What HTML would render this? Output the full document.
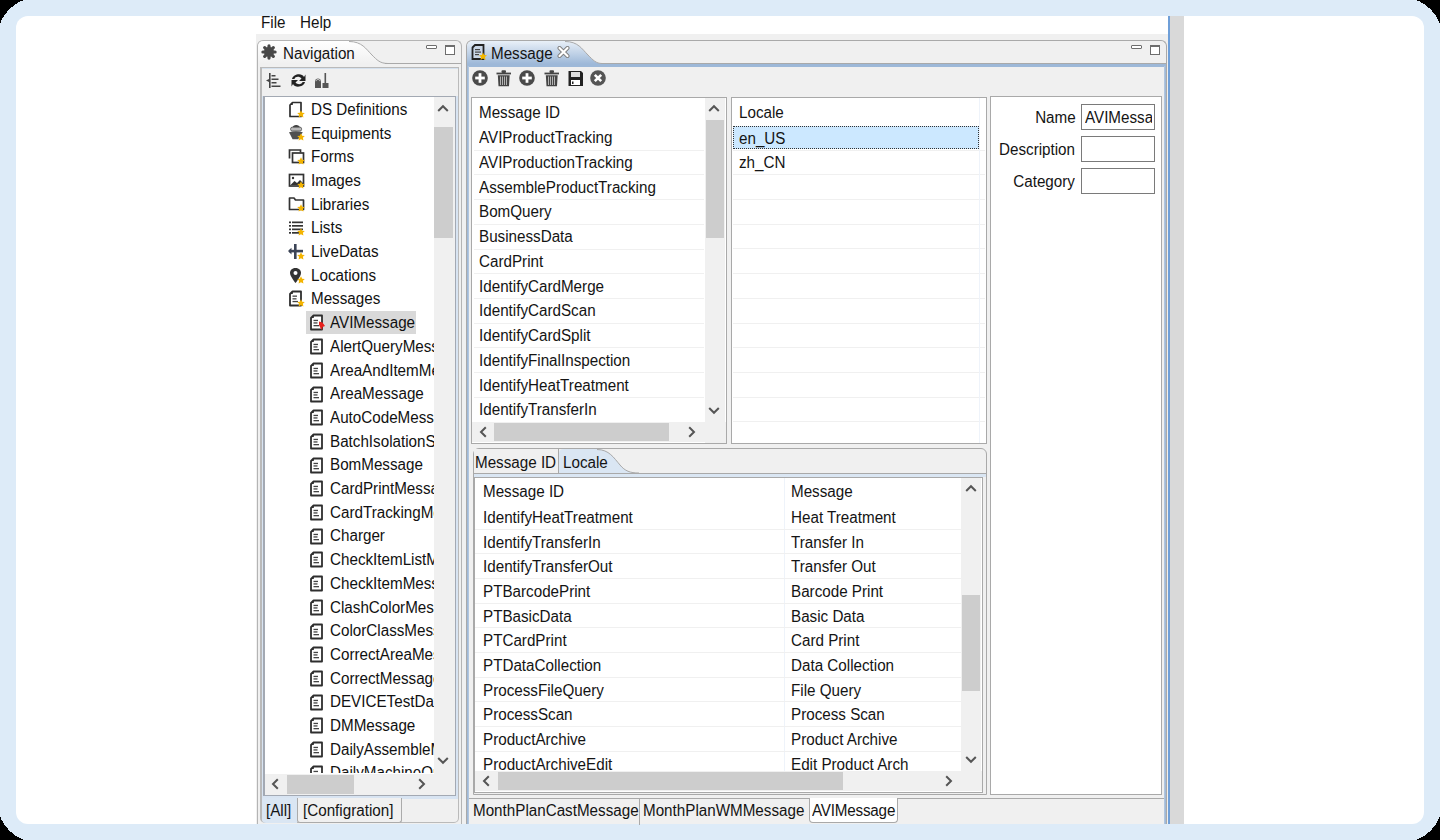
<!DOCTYPE html>
<html><head><meta charset="utf-8"><style>
html,body{margin:0;padding:0;width:1440px;height:840px;overflow:hidden;background:#000;font-family:"Liberation Sans", sans-serif}
div{position:absolute;box-sizing:border-box}
.t{white-space:nowrap}
svg{position:absolute}
</style></head><body>
<div style="left:0px;top:0px;width:1440px;height:840px;background:#ddebf8"></div>
<svg style="position:absolute;left:0px;top:0px" width="26" height="26" viewBox="0 0 26 26"><path d="M0 0 L0 25.50 L0.00 25.50 L0.03 25.16 L0.10 24.64 L0.24 24.03 L0.42 23.35 L0.65 22.61 L0.94 21.83 L1.27 21.02 L1.65 20.17 L2.08 19.30 L2.55 18.42 L3.07 17.51 L3.64 16.60 L4.24 15.69 L4.88 14.77 L5.56 13.85 L6.28 12.94 L7.02 12.05 L7.80 11.16 L8.61 10.29 L9.44 9.44 L10.29 8.61 L11.16 7.80 L12.05 7.02 L12.94 6.28 L13.85 5.56 L14.77 4.88 L15.69 4.24 L16.60 3.64 L17.51 3.07 L18.42 2.55 L19.30 2.08 L20.17 1.65 L21.02 1.27 L21.83 0.94 L22.61 0.65 L23.35 0.42 L24.03 0.24 L24.64 0.10 L25.16 0.03 L25.50 0.00 L25.50 0 Z" fill="#000" transform="" shape-rendering="crispEdges"/></svg>
<svg style="position:absolute;left:1414px;top:0px" width="26" height="26" viewBox="0 0 26 26"><path d="M0 0 L0 25.50 L0.00 25.50 L0.03 25.16 L0.10 24.64 L0.24 24.03 L0.42 23.35 L0.65 22.61 L0.94 21.83 L1.27 21.02 L1.65 20.17 L2.08 19.30 L2.55 18.42 L3.07 17.51 L3.64 16.60 L4.24 15.69 L4.88 14.77 L5.56 13.85 L6.28 12.94 L7.02 12.05 L7.80 11.16 L8.61 10.29 L9.44 9.44 L10.29 8.61 L11.16 7.80 L12.05 7.02 L12.94 6.28 L13.85 5.56 L14.77 4.88 L15.69 4.24 L16.60 3.64 L17.51 3.07 L18.42 2.55 L19.30 2.08 L20.17 1.65 L21.02 1.27 L21.83 0.94 L22.61 0.65 L23.35 0.42 L24.03 0.24 L24.64 0.10 L25.16 0.03 L25.50 0.00 L25.50 0 Z" fill="#000" transform="scale(-1,1) translate(-26,0)" shape-rendering="crispEdges"/></svg>
<svg style="position:absolute;left:0px;top:814px" width="26" height="26" viewBox="0 0 26 26"><path d="M0 0 L0 25.50 L0.00 25.50 L0.03 25.16 L0.10 24.64 L0.24 24.03 L0.42 23.35 L0.65 22.61 L0.94 21.83 L1.27 21.02 L1.65 20.17 L2.08 19.30 L2.55 18.42 L3.07 17.51 L3.64 16.60 L4.24 15.69 L4.88 14.77 L5.56 13.85 L6.28 12.94 L7.02 12.05 L7.80 11.16 L8.61 10.29 L9.44 9.44 L10.29 8.61 L11.16 7.80 L12.05 7.02 L12.94 6.28 L13.85 5.56 L14.77 4.88 L15.69 4.24 L16.60 3.64 L17.51 3.07 L18.42 2.55 L19.30 2.08 L20.17 1.65 L21.02 1.27 L21.83 0.94 L22.61 0.65 L23.35 0.42 L24.03 0.24 L24.64 0.10 L25.16 0.03 L25.50 0.00 L25.50 0 Z" fill="#000" transform="scale(1,-1) translate(0,-26)" shape-rendering="crispEdges"/></svg>
<svg style="position:absolute;left:1414px;top:814px" width="26" height="26" viewBox="0 0 26 26"><path d="M0 0 L0 25.50 L0.00 25.50 L0.03 25.16 L0.10 24.64 L0.24 24.03 L0.42 23.35 L0.65 22.61 L0.94 21.83 L1.27 21.02 L1.65 20.17 L2.08 19.30 L2.55 18.42 L3.07 17.51 L3.64 16.60 L4.24 15.69 L4.88 14.77 L5.56 13.85 L6.28 12.94 L7.02 12.05 L7.80 11.16 L8.61 10.29 L9.44 9.44 L10.29 8.61 L11.16 7.80 L12.05 7.02 L12.94 6.28 L13.85 5.56 L14.77 4.88 L15.69 4.24 L16.60 3.64 L17.51 3.07 L18.42 2.55 L19.30 2.08 L20.17 1.65 L21.02 1.27 L21.83 0.94 L22.61 0.65 L23.35 0.42 L24.03 0.24 L24.64 0.10 L25.16 0.03 L25.50 0.00 L25.50 0 Z" fill="#000" transform="scale(-1,-1) translate(-26,-26)" shape-rendering="crispEdges"/></svg>
<div style="left:16px;top:16px;width:1408px;height:808px;background:#fff;border-radius:12px"></div>
<div style="left:256px;top:33.5px;width:912px;height:790.5px;background:#f0f0f0"></div>
<div class="t" style="left:261px;top:14.40px;font-size:16px;line-height:17px;color:#141414;transform:scaleX(0.95);transform-origin:left center;">File</div>
<div class="t" style="left:299.7px;top:14.40px;font-size:16px;line-height:17px;color:#141414;transform:scaleX(0.95);transform-origin:left center;">Help</div>
<div style="left:1168px;top:16px;width:2px;height:808px;background:#6f9fd8"></div>
<div style="left:1170px;top:16px;width:14px;height:808px;background:#d9d9d9"></div>
<div style="left:257px;top:40px;width:205px;height:784px;border:1px solid #b4b4b4;border-bottom:none;border-radius:6px 6px 0 0;background:#f0f0f0"></div>
<svg style="position:absolute;left:258px;top:41px" width="130" height="23" viewBox="0 0 130 23"><defs><linearGradient id="gn" x1="0" y1="0" x2="0" y2="1"><stop offset="0" stop-color="#ffffff"/><stop offset="1" stop-color="#f0f0f0"/></linearGradient></defs><path d="M0 23 L0 6 Q0 0 6 0 L91 0 C104 0 108 8 114 14 C119 19 122 22.5 130 22.5 L130 23 Z" fill="url(#gn)"/><path d="M91 0.5 C104 0.5 108 8 114 14 C119 19 122 22.5 130 22.5" fill="none" stroke="#a9a9a9" stroke-width="1"/></svg>
<div style="left:385px;top:63px;width:76px;height:1px;background:#a9a9a9"></div>
<div class="t" style="left:282.5px;top:44.50px;font-size:16px;line-height:17px;color:#141414;transform:scaleX(0.95);transform-origin:left center;">Navigation</div>
<svg style="position:absolute;left:261px;top:44px" width="16" height="16" viewBox="0 0 16 16"><g fill="#484848"><circle cx="8" cy="8" r="5"/><rect x="6.4" y="0.3" width="3.2" height="15.4" rx="1.6" transform="rotate(0 8 8)"/><rect x="6.4" y="0.3" width="3.2" height="15.4" rx="1.6" transform="rotate(45 8 8)"/><rect x="6.4" y="0.3" width="3.2" height="15.4" rx="1.6" transform="rotate(90 8 8)"/><rect x="6.4" y="0.3" width="3.2" height="15.4" rx="1.6" transform="rotate(135 8 8)"/></g></svg>
<div style="left:426px;top:45px;width:10.5px;height:3.5px;border:1px solid #6d6d6d;box-sizing:border-box;border-radius:1px;background:#fff"></div>
<div style="left:444.5px;top:45px;width:10.5px;height:10px;border:1px solid #6d6d6d;border-top-width:2px;box-sizing:border-box;background:#fff"></div>
<div style="left:260px;top:66.5px;width:199px;height:756px;border:1px solid #bababa;border-width:1px 1px 1px 2px;border-radius:0 0 5px 5px;background:#f0f0f0"></div>
<div style="left:262px;top:67.5px;width:196px;height:1.5px;background:#d5e1ee"></div>
<svg style="position:absolute;left:266px;top:72px" width="17" height="17" viewBox="0 0 17 17"><g fill="#444"><rect x="3" y="1" width="1.6" height="15"/><rect x="5.5" y="3" width="4" height="1.5"/><rect x="5.5" y="6.5" width="7" height="1.5"/><rect x="5.5" y="10" width="5" height="1.5"/><rect x="5.5" y="13.5" width="9" height="1.5"/><path d="M0 8.5 L3 7 L3 10 Z"/></g></svg>
<svg style="position:absolute;left:290px;top:72px" width="17" height="17" viewBox="0 0 17 17"><g fill="#222"><path d="M2 7 C3 2 12 0.5 14 5 L15.5 2.5 L15.5 9 L9 9 L11.5 6.5 C9.5 4 5 4.5 4.5 7 Z"/><path d="M15 10 C14 15 5 16.5 3 12 L1.5 14.5 L1.5 8 L8 8 L5.5 10.5 C7.5 13 12 12.5 12.5 10 Z"/></g></svg>
<svg style="position:absolute;left:314px;top:72px" width="17" height="17" viewBox="0 0 17 17"><g fill="#555"><path d="M1 9 C1 5.5 7 5.5 7 9 L7 16 L1 16 Z"/><rect x="10.5" y="1" width="1.6" height="11"/><rect x="8.5" y="11" width="6" height="5"/></g><path d="M2 9.2 C2 7 6 7 6 9.2" fill="none" stroke="#ddd" stroke-width="1"/></svg>
<div style="left:262px;top:95.5px;width:196px;height:703px;background:#d8e4f2"></div>
<div style="left:263px;top:95.5px;width:193px;height:700px;border:1px solid #a3a9b3;border-left-width:2px;border-top-width:1.5px;background:#fff"></div>
<div style="left:265px;top:97px;width:168.7px;height:676px;overflow:hidden;background:#fff">
<div class="t" style="left:46.19999999999999px;top:3.80px;font-size:16px;line-height:17px;color:#111;transform:scaleX(0.95);transform-origin:left center;">DS Definitions</div>
<svg style="position:absolute;left:23.19999999999999px;top:3.5999999999999943px" width="17" height="17" viewBox="0 0 17 17"><path d="M2 4 L4.5 1.5 L13 1.5 L13 15.5 L2 15.5 Z" fill="#fff" stroke="#2e2e2e" stroke-width="1.7" stroke-linejoin="round"/><path d="M2 4 L4.8 4 L4.8 1.2Z" fill="#2e2e2e"/><path d="M13 9.2 L14.2 11.7 L16.8 12 L14.9 13.8 L15.4 16.5 L13 15.2 L10.6 16.5 L11.1 13.8 L9.2 12 L11.8 11.7 Z" fill="#f4b400"/></svg>
<div class="t" style="left:46.19999999999999px;top:27.50px;font-size:16px;line-height:17px;color:#111;transform:scaleX(0.95);transform-origin:left center;">Equipments</div>
<svg style="position:absolute;left:23.19999999999999px;top:27.299999999999997px" width="17" height="17" viewBox="0 0 17 17"><path d="M4.6 3.6 C4.6 0 11.8 0 11.8 3.6 Z" fill="#3a3a3a"/><rect x="2.6" y="3.2" width="11" height="3.8" rx="1.6" fill="#b8b8b8" stroke="#5a5a5a" stroke-width="0.9"/><path d="M1 8.2 Q8 6.5 14.8 8.2 L10.2 15.3 L4.6 15.3 Z" fill="#505050"/><path d="M13 9.2 L14.2 11.7 L16.8 12 L14.9 13.8 L15.4 16.5 L13 15.2 L10.6 16.5 L11.1 13.8 L9.2 12 L11.8 11.7 Z" fill="#f4b400"/></svg>
<div class="t" style="left:46.19999999999999px;top:51.20px;font-size:16px;line-height:17px;color:#111;transform:scaleX(0.95);transform-origin:left center;">Forms</div>
<svg style="position:absolute;left:23.19999999999999px;top:51.0px" width="17" height="17" viewBox="0 0 17 17"><path d="M1.5 10.5 L1.5 2 L12.5 2 L12.5 4.5" fill="none" stroke="#333" stroke-width="1.7"/><rect x="4.5" y="5" width="11" height="9.5" fill="#fff" stroke="#333" stroke-width="1.7"/><path d="M13 9.2 L14.2 11.7 L16.8 12 L14.9 13.8 L15.4 16.5 L13 15.2 L10.6 16.5 L11.1 13.8 L9.2 12 L11.8 11.7 Z" fill="#f4b400"/></svg>
<div class="t" style="left:46.19999999999999px;top:74.90px;font-size:16px;line-height:17px;color:#111;transform:scaleX(0.95);transform-origin:left center;">Images</div>
<svg style="position:absolute;left:23.19999999999999px;top:74.69999999999999px" width="17" height="17" viewBox="0 0 17 17"><rect x="1.5" y="2.5" width="14" height="11.5" fill="#fff" stroke="#333" stroke-width="1.7"/><path d="M2.5 13 L6.5 9 L9 11 L12 8 L15 11 L15 13 Z" fill="#333"/><circle cx="5" cy="6" r="1.2" fill="#333"/><path d="M13 9.2 L14.2 11.7 L16.8 12 L14.9 13.8 L15.4 16.5 L13 15.2 L10.6 16.5 L11.1 13.8 L9.2 12 L11.8 11.7 Z" fill="#f4b400"/></svg>
<div class="t" style="left:46.19999999999999px;top:98.60px;font-size:16px;line-height:17px;color:#111;transform:scaleX(0.95);transform-origin:left center;">Libraries</div>
<svg style="position:absolute;left:23.19999999999999px;top:98.4px" width="17" height="17" viewBox="0 0 17 17"><path d="M1.5 3 L6 3 L7.5 5 L15.5 5 L15.5 14.5 L1.5 14.5 Z" fill="#fff" stroke="#333" stroke-width="1.7" stroke-linejoin="round"/><path d="M13 9.2 L14.2 11.7 L16.8 12 L14.9 13.8 L15.4 16.5 L13 15.2 L10.6 16.5 L11.1 13.8 L9.2 12 L11.8 11.7 Z" fill="#f4b400"/></svg>
<div class="t" style="left:46.19999999999999px;top:122.30px;font-size:16px;line-height:17px;color:#111;transform:scaleX(0.95);transform-origin:left center;">Lists</div>
<svg style="position:absolute;left:23.19999999999999px;top:122.10000000000002px" width="17" height="17" viewBox="0 0 17 17"><g fill="#333"><rect x="1" y="2.5" width="2" height="1.7"/><rect x="4" y="2.5" width="11" height="1.7"/><rect x="1" y="6" width="2" height="1.7"/><rect x="4" y="6" width="11" height="1.7"/><rect x="1" y="9.5" width="2" height="1.7"/><rect x="4" y="9.5" width="11" height="1.7"/><rect x="1" y="13" width="2" height="1.7"/><rect x="4" y="13" width="8" height="1.7"/></g><path d="M13 9.2 L14.2 11.7 L16.8 12 L14.9 13.8 L15.4 16.5 L13 15.2 L10.6 16.5 L11.1 13.8 L9.2 12 L11.8 11.7 Z" fill="#f4b400"/></svg>
<div class="t" style="left:46.19999999999999px;top:146.00px;font-size:16px;line-height:17px;color:#111;transform:scaleX(0.95);transform-origin:left center;">LiveDatas</div>
<svg style="position:absolute;left:23.19999999999999px;top:145.8px" width="17" height="17" viewBox="0 0 17 17"><g fill="#3c4456"><rect x="6" y="1" width="2.6" height="15"/><rect x="1" y="6.8" width="14" height="2.6"/><path d="M0 8.1 L3.5 4.8 L3.5 11.4Z"/></g><path d="M13 9.2 L14.2 11.7 L16.8 12 L14.9 13.8 L15.4 16.5 L13 15.2 L10.6 16.5 L11.1 13.8 L9.2 12 L11.8 11.7 Z" fill="#f4b400"/></svg>
<div class="t" style="left:46.19999999999999px;top:169.70px;font-size:16px;line-height:17px;color:#111;transform:scaleX(0.95);transform-origin:left center;">Locations</div>
<svg style="position:absolute;left:23.19999999999999px;top:169.5px" width="17" height="17" viewBox="0 0 17 17"><path d="M7.5 1 C3.8 1 2 3.6 2 6 C2 9.3 7.5 16 7.5 16 C7.5 16 13 9.3 13 6 C13 3.6 11.2 1 7.5 1 Z" fill="#333"/><circle cx="7.5" cy="6" r="2" fill="#fff"/><path d="M13 9.2 L14.2 11.7 L16.8 12 L14.9 13.8 L15.4 16.5 L13 15.2 L10.6 16.5 L11.1 13.8 L9.2 12 L11.8 11.7 Z" fill="#f4b400"/></svg>
<div class="t" style="left:46.19999999999999px;top:193.40px;font-size:16px;line-height:17px;color:#111;transform:scaleX(0.95);transform-origin:left center;">Messages</div>
<svg style="position:absolute;left:23.19999999999999px;top:193.2px" width="17" height="17" viewBox="0 0 17 17"><path d="M2 4 L4.5 1.5 L13 1.5 L13 15.5 L2 15.5 Z" fill="#fff" stroke="#2e2e2e" stroke-width="1.8" stroke-linejoin="round"/><path d="M2 4 L4.8 4 L4.8 1.2Z" fill="#2e2e2e"/><g fill="#444"><rect x="4.5" y="5.5" width="4.5" height="1.3"/><rect x="4.5" y="8.2" width="4" height="1.3"/><rect x="4.5" y="10.9" width="5.5" height="1.3"/></g><path d="M13 9.2 L14.2 11.7 L16.8 12 L14.9 13.8 L15.4 16.5 L13 15.2 L10.6 16.5 L11.1 13.8 L9.2 12 L11.8 11.7 Z" fill="#f4b400"/></svg>
<div style="left:41px;top:214.09999999999997px;width:110px;height:23.3px;background:#d9d9d9"></div>
<div class="t" style="left:64.89999999999998px;top:217.10px;font-size:16px;line-height:17px;color:#111;transform:scaleX(0.95);transform-origin:left center;">AVIMessage</div>
<svg style="position:absolute;left:43.5px;top:217.39999999999998px" width="17" height="17" viewBox="0 0 17 17"><path d="M2 4 L4.5 1.5 L13 1.5 L13 15.5 L2 15.5 Z" fill="#fff" stroke="#2e2e2e" stroke-width="1.8" stroke-linejoin="round"/><path d="M2 4 L4.8 4 L4.8 1.2Z" fill="#2e2e2e"/><g fill="#444"><rect x="4.5" y="5.8" width="4.5" height="1.3"/><rect x="4.5" y="8.3" width="4" height="1.3"/><rect x="4.5" y="11" width="5.5" height="1.3"/></g><path d="M10 7.5 L13.5 8.5 L16 12 L13.5 13 L13 16 L11.5 14 L10 11 Z" fill="#e8201c"/></svg>
<div class="t" style="left:64.89999999999998px;top:240.80px;font-size:16px;line-height:17px;color:#111;transform:scaleX(0.95);transform-origin:left center;">AlertQueryMessage</div>
<svg style="position:absolute;left:43.5px;top:241.10000000000002px" width="17" height="17" viewBox="0 0 17 17"><path d="M2 4 L4.5 1.5 L13 1.5 L13 15.5 L2 15.5 Z" fill="#fff" stroke="#2e2e2e" stroke-width="1.8" stroke-linejoin="round"/><path d="M2 4 L4.8 4 L4.8 1.2Z" fill="#2e2e2e"/><g fill="#444"><rect x="4.5" y="5.8" width="4.5" height="1.3"/><rect x="4.5" y="8.3" width="4" height="1.3"/><rect x="4.5" y="11" width="5.5" height="1.3"/></g></svg>
<div class="t" style="left:64.89999999999998px;top:264.50px;font-size:16px;line-height:17px;color:#111;transform:scaleX(0.95);transform-origin:left center;">AreaAndItemMessage</div>
<svg style="position:absolute;left:43.5px;top:264.8px" width="17" height="17" viewBox="0 0 17 17"><path d="M2 4 L4.5 1.5 L13 1.5 L13 15.5 L2 15.5 Z" fill="#fff" stroke="#2e2e2e" stroke-width="1.8" stroke-linejoin="round"/><path d="M2 4 L4.8 4 L4.8 1.2Z" fill="#2e2e2e"/><g fill="#444"><rect x="4.5" y="5.8" width="4.5" height="1.3"/><rect x="4.5" y="8.3" width="4" height="1.3"/><rect x="4.5" y="11" width="5.5" height="1.3"/></g></svg>
<div class="t" style="left:64.89999999999998px;top:288.20px;font-size:16px;line-height:17px;color:#111;transform:scaleX(0.95);transform-origin:left center;">AreaMessage</div>
<svg style="position:absolute;left:43.5px;top:288.5px" width="17" height="17" viewBox="0 0 17 17"><path d="M2 4 L4.5 1.5 L13 1.5 L13 15.5 L2 15.5 Z" fill="#fff" stroke="#2e2e2e" stroke-width="1.8" stroke-linejoin="round"/><path d="M2 4 L4.8 4 L4.8 1.2Z" fill="#2e2e2e"/><g fill="#444"><rect x="4.5" y="5.8" width="4.5" height="1.3"/><rect x="4.5" y="8.3" width="4" height="1.3"/><rect x="4.5" y="11" width="5.5" height="1.3"/></g></svg>
<div class="t" style="left:64.89999999999998px;top:311.90px;font-size:16px;line-height:17px;color:#111;transform:scaleX(0.95);transform-origin:left center;">AutoCodeMessage</div>
<svg style="position:absolute;left:43.5px;top:312.2px" width="17" height="17" viewBox="0 0 17 17"><path d="M2 4 L4.5 1.5 L13 1.5 L13 15.5 L2 15.5 Z" fill="#fff" stroke="#2e2e2e" stroke-width="1.8" stroke-linejoin="round"/><path d="M2 4 L4.8 4 L4.8 1.2Z" fill="#2e2e2e"/><g fill="#444"><rect x="4.5" y="5.8" width="4.5" height="1.3"/><rect x="4.5" y="8.3" width="4" height="1.3"/><rect x="4.5" y="11" width="5.5" height="1.3"/></g></svg>
<div class="t" style="left:64.89999999999998px;top:335.60px;font-size:16px;line-height:17px;color:#111;transform:scaleX(0.95);transform-origin:left center;">BatchIsolationSetting</div>
<svg style="position:absolute;left:43.5px;top:335.90000000000003px" width="17" height="17" viewBox="0 0 17 17"><path d="M2 4 L4.5 1.5 L13 1.5 L13 15.5 L2 15.5 Z" fill="#fff" stroke="#2e2e2e" stroke-width="1.8" stroke-linejoin="round"/><path d="M2 4 L4.8 4 L4.8 1.2Z" fill="#2e2e2e"/><g fill="#444"><rect x="4.5" y="5.8" width="4.5" height="1.3"/><rect x="4.5" y="8.3" width="4" height="1.3"/><rect x="4.5" y="11" width="5.5" height="1.3"/></g></svg>
<div class="t" style="left:64.89999999999998px;top:359.30px;font-size:16px;line-height:17px;color:#111;transform:scaleX(0.95);transform-origin:left center;">BomMessage</div>
<svg style="position:absolute;left:43.5px;top:359.6px" width="17" height="17" viewBox="0 0 17 17"><path d="M2 4 L4.5 1.5 L13 1.5 L13 15.5 L2 15.5 Z" fill="#fff" stroke="#2e2e2e" stroke-width="1.8" stroke-linejoin="round"/><path d="M2 4 L4.8 4 L4.8 1.2Z" fill="#2e2e2e"/><g fill="#444"><rect x="4.5" y="5.8" width="4.5" height="1.3"/><rect x="4.5" y="8.3" width="4" height="1.3"/><rect x="4.5" y="11" width="5.5" height="1.3"/></g></svg>
<div class="t" style="left:64.89999999999998px;top:383.00px;font-size:16px;line-height:17px;color:#111;transform:scaleX(0.95);transform-origin:left center;">CardPrintMessage</div>
<svg style="position:absolute;left:43.5px;top:383.3px" width="17" height="17" viewBox="0 0 17 17"><path d="M2 4 L4.5 1.5 L13 1.5 L13 15.5 L2 15.5 Z" fill="#fff" stroke="#2e2e2e" stroke-width="1.8" stroke-linejoin="round"/><path d="M2 4 L4.8 4 L4.8 1.2Z" fill="#2e2e2e"/><g fill="#444"><rect x="4.5" y="5.8" width="4.5" height="1.3"/><rect x="4.5" y="8.3" width="4" height="1.3"/><rect x="4.5" y="11" width="5.5" height="1.3"/></g></svg>
<div class="t" style="left:64.89999999999998px;top:406.70px;font-size:16px;line-height:17px;color:#111;transform:scaleX(0.95);transform-origin:left center;">CardTrackingMessage</div>
<svg style="position:absolute;left:43.5px;top:406.99999999999994px" width="17" height="17" viewBox="0 0 17 17"><path d="M2 4 L4.5 1.5 L13 1.5 L13 15.5 L2 15.5 Z" fill="#fff" stroke="#2e2e2e" stroke-width="1.8" stroke-linejoin="round"/><path d="M2 4 L4.8 4 L4.8 1.2Z" fill="#2e2e2e"/><g fill="#444"><rect x="4.5" y="5.8" width="4.5" height="1.3"/><rect x="4.5" y="8.3" width="4" height="1.3"/><rect x="4.5" y="11" width="5.5" height="1.3"/></g></svg>
<div class="t" style="left:64.89999999999998px;top:430.40px;font-size:16px;line-height:17px;color:#111;transform:scaleX(0.95);transform-origin:left center;">Charger</div>
<svg style="position:absolute;left:43.5px;top:430.69999999999993px" width="17" height="17" viewBox="0 0 17 17"><path d="M2 4 L4.5 1.5 L13 1.5 L13 15.5 L2 15.5 Z" fill="#fff" stroke="#2e2e2e" stroke-width="1.8" stroke-linejoin="round"/><path d="M2 4 L4.8 4 L4.8 1.2Z" fill="#2e2e2e"/><g fill="#444"><rect x="4.5" y="5.8" width="4.5" height="1.3"/><rect x="4.5" y="8.3" width="4" height="1.3"/><rect x="4.5" y="11" width="5.5" height="1.3"/></g></svg>
<div class="t" style="left:64.89999999999998px;top:454.10px;font-size:16px;line-height:17px;color:#111;transform:scaleX(0.95);transform-origin:left center;">CheckItemListMessage</div>
<svg style="position:absolute;left:43.5px;top:454.4px" width="17" height="17" viewBox="0 0 17 17"><path d="M2 4 L4.5 1.5 L13 1.5 L13 15.5 L2 15.5 Z" fill="#fff" stroke="#2e2e2e" stroke-width="1.8" stroke-linejoin="round"/><path d="M2 4 L4.8 4 L4.8 1.2Z" fill="#2e2e2e"/><g fill="#444"><rect x="4.5" y="5.8" width="4.5" height="1.3"/><rect x="4.5" y="8.3" width="4" height="1.3"/><rect x="4.5" y="11" width="5.5" height="1.3"/></g></svg>
<div class="t" style="left:64.89999999999998px;top:477.80px;font-size:16px;line-height:17px;color:#111;transform:scaleX(0.95);transform-origin:left center;">CheckItemMessage</div>
<svg style="position:absolute;left:43.5px;top:478.0999999999999px" width="17" height="17" viewBox="0 0 17 17"><path d="M2 4 L4.5 1.5 L13 1.5 L13 15.5 L2 15.5 Z" fill="#fff" stroke="#2e2e2e" stroke-width="1.8" stroke-linejoin="round"/><path d="M2 4 L4.8 4 L4.8 1.2Z" fill="#2e2e2e"/><g fill="#444"><rect x="4.5" y="5.8" width="4.5" height="1.3"/><rect x="4.5" y="8.3" width="4" height="1.3"/><rect x="4.5" y="11" width="5.5" height="1.3"/></g></svg>
<div class="t" style="left:64.89999999999998px;top:501.50px;font-size:16px;line-height:17px;color:#111;transform:scaleX(0.95);transform-origin:left center;">ClashColorMessage</div>
<svg style="position:absolute;left:43.5px;top:501.79999999999995px" width="17" height="17" viewBox="0 0 17 17"><path d="M2 4 L4.5 1.5 L13 1.5 L13 15.5 L2 15.5 Z" fill="#fff" stroke="#2e2e2e" stroke-width="1.8" stroke-linejoin="round"/><path d="M2 4 L4.8 4 L4.8 1.2Z" fill="#2e2e2e"/><g fill="#444"><rect x="4.5" y="5.8" width="4.5" height="1.3"/><rect x="4.5" y="8.3" width="4" height="1.3"/><rect x="4.5" y="11" width="5.5" height="1.3"/></g></svg>
<div class="t" style="left:64.89999999999998px;top:525.20px;font-size:16px;line-height:17px;color:#111;transform:scaleX(0.95);transform-origin:left center;">ColorClassMessage</div>
<svg style="position:absolute;left:43.5px;top:525.4999999999999px" width="17" height="17" viewBox="0 0 17 17"><path d="M2 4 L4.5 1.5 L13 1.5 L13 15.5 L2 15.5 Z" fill="#fff" stroke="#2e2e2e" stroke-width="1.8" stroke-linejoin="round"/><path d="M2 4 L4.8 4 L4.8 1.2Z" fill="#2e2e2e"/><g fill="#444"><rect x="4.5" y="5.8" width="4.5" height="1.3"/><rect x="4.5" y="8.3" width="4" height="1.3"/><rect x="4.5" y="11" width="5.5" height="1.3"/></g></svg>
<div class="t" style="left:64.89999999999998px;top:548.90px;font-size:16px;line-height:17px;color:#111;transform:scaleX(0.95);transform-origin:left center;">CorrectAreaMessage</div>
<svg style="position:absolute;left:43.5px;top:549.1999999999999px" width="17" height="17" viewBox="0 0 17 17"><path d="M2 4 L4.5 1.5 L13 1.5 L13 15.5 L2 15.5 Z" fill="#fff" stroke="#2e2e2e" stroke-width="1.8" stroke-linejoin="round"/><path d="M2 4 L4.8 4 L4.8 1.2Z" fill="#2e2e2e"/><g fill="#444"><rect x="4.5" y="5.8" width="4.5" height="1.3"/><rect x="4.5" y="8.3" width="4" height="1.3"/><rect x="4.5" y="11" width="5.5" height="1.3"/></g></svg>
<div class="t" style="left:64.89999999999998px;top:572.60px;font-size:16px;line-height:17px;color:#111;transform:scaleX(0.95);transform-origin:left center;">CorrectMessage</div>
<svg style="position:absolute;left:43.5px;top:572.8999999999999px" width="17" height="17" viewBox="0 0 17 17"><path d="M2 4 L4.5 1.5 L13 1.5 L13 15.5 L2 15.5 Z" fill="#fff" stroke="#2e2e2e" stroke-width="1.8" stroke-linejoin="round"/><path d="M2 4 L4.8 4 L4.8 1.2Z" fill="#2e2e2e"/><g fill="#444"><rect x="4.5" y="5.8" width="4.5" height="1.3"/><rect x="4.5" y="8.3" width="4" height="1.3"/><rect x="4.5" y="11" width="5.5" height="1.3"/></g></svg>
<div class="t" style="left:64.89999999999998px;top:596.30px;font-size:16px;line-height:17px;color:#111;transform:scaleX(0.95);transform-origin:left center;">DEVICETestData</div>
<svg style="position:absolute;left:43.5px;top:596.5999999999999px" width="17" height="17" viewBox="0 0 17 17"><path d="M2 4 L4.5 1.5 L13 1.5 L13 15.5 L2 15.5 Z" fill="#fff" stroke="#2e2e2e" stroke-width="1.8" stroke-linejoin="round"/><path d="M2 4 L4.8 4 L4.8 1.2Z" fill="#2e2e2e"/><g fill="#444"><rect x="4.5" y="5.8" width="4.5" height="1.3"/><rect x="4.5" y="8.3" width="4" height="1.3"/><rect x="4.5" y="11" width="5.5" height="1.3"/></g></svg>
<div class="t" style="left:64.89999999999998px;top:620.00px;font-size:16px;line-height:17px;color:#111;transform:scaleX(0.95);transform-origin:left center;">DMMessage</div>
<svg style="position:absolute;left:43.5px;top:620.2999999999998px" width="17" height="17" viewBox="0 0 17 17"><path d="M2 4 L4.5 1.5 L13 1.5 L13 15.5 L2 15.5 Z" fill="#fff" stroke="#2e2e2e" stroke-width="1.8" stroke-linejoin="round"/><path d="M2 4 L4.8 4 L4.8 1.2Z" fill="#2e2e2e"/><g fill="#444"><rect x="4.5" y="5.8" width="4.5" height="1.3"/><rect x="4.5" y="8.3" width="4" height="1.3"/><rect x="4.5" y="11" width="5.5" height="1.3"/></g></svg>
<div class="t" style="left:64.89999999999998px;top:643.70px;font-size:16px;line-height:17px;color:#111;transform:scaleX(0.95);transform-origin:left center;">DailyAssembleMessage</div>
<svg style="position:absolute;left:43.5px;top:643.9999999999999px" width="17" height="17" viewBox="0 0 17 17"><path d="M2 4 L4.5 1.5 L13 1.5 L13 15.5 L2 15.5 Z" fill="#fff" stroke="#2e2e2e" stroke-width="1.8" stroke-linejoin="round"/><path d="M2 4 L4.8 4 L4.8 1.2Z" fill="#2e2e2e"/><g fill="#444"><rect x="4.5" y="5.8" width="4.5" height="1.3"/><rect x="4.5" y="8.3" width="4" height="1.3"/><rect x="4.5" y="11" width="5.5" height="1.3"/></g></svg>
<div class="t" style="left:64.89999999999998px;top:667.40px;font-size:16px;line-height:17px;color:#111;transform:scaleX(0.95);transform-origin:left center;">DailyMachineOutput</div>
<svg style="position:absolute;left:43.5px;top:667.6999999999999px" width="17" height="17" viewBox="0 0 17 17"><path d="M2 4 L4.5 1.5 L13 1.5 L13 15.5 L2 15.5 Z" fill="#fff" stroke="#2e2e2e" stroke-width="1.8" stroke-linejoin="round"/><path d="M2 4 L4.8 4 L4.8 1.2Z" fill="#2e2e2e"/><g fill="#444"><rect x="4.5" y="5.8" width="4.5" height="1.3"/><rect x="4.5" y="8.3" width="4" height="1.3"/><rect x="4.5" y="11" width="5.5" height="1.3"/></g></svg>
</div>
<div style="left:433.7px;top:96.8px;width:21.3px;height:677px;background:#f0f0f0"></div>
<div style="left:434px;top:127.2px;width:19px;height:111px;background:#cdcdcd"></div>
<svg style="position:absolute;left:436.2px;top:102.5px" width="14" height="10" viewBox="0 0 14 10"><path d="M2.2 8 L7 3.2 L11.8 8" fill="none" stroke="#555" stroke-width="2"/></svg>
<svg style="position:absolute;left:436.2px;top:756px" width="14" height="10" viewBox="0 0 14 10"><path d="M2.2 2 L7 6.8 L11.8 2" fill="none" stroke="#555" stroke-width="2"/></svg>
<div style="left:264.5px;top:773.5px;width:190px;height:21px;background:#f0f0f0"></div>
<div style="left:287px;top:774.5px;width:67px;height:19px;background:#cdcdcd"></div>
<svg style="position:absolute;left:269.5px;top:777px" width="10" height="14" viewBox="0 0 10 14"><path d="M7.8 2.2 L3 7 L7.8 11.8" fill="none" stroke="#555" stroke-width="2"/></svg>
<svg style="position:absolute;left:416.5px;top:777px" width="10" height="14" viewBox="0 0 10 14"><path d="M2.2 2.2 L7 7 L2.2 11.8" fill="none" stroke="#555" stroke-width="2"/></svg>
<div style="left:262px;top:797.5px;width:35px;height:25px;background:#dae6f3;border-radius:0 0 0 4px"></div>
<div class="t" style="left:265.5px;top:802.30px;font-size:16px;line-height:17px;color:#141414;transform:scaleX(0.95);transform-origin:left center;">[All]</div>
<div style="left:296.5px;top:797.5px;width:105px;height:25px;background:#f0f0f0;border:1px solid #ababab;border-top:none;border-radius:0 0 3px 3px"></div>
<div class="t" style="left:302.6px;top:802.30px;font-size:16px;line-height:17px;color:#141414;transform:scaleX(0.95);transform-origin:left center;">[Configration]</div>
<div style="left:466px;top:40px;width:701px;height:784px;border:1px solid #a9a9a9;border-bottom:none;border-radius:6px 6px 0 0;background:#f0f0f0"></div>
<svg style="position:absolute;left:467px;top:41px" width="135" height="23" viewBox="0 0 135 23"><defs><linearGradient id="gm" x1="0" y1="0" x2="0" y2="1"><stop offset="0" stop-color="#e9f0f8"/><stop offset="1" stop-color="#9db8d8"/></linearGradient></defs><path d="M0 23 L0 6 Q0 0 6 0 L98 0 C111 0 115 8 121 14 C126 19 129 22.5 135 22.5 L135 23 Z" fill="url(#gm)"/><path d="M98 0.5 C111 0.5 115 8 121 14 C126 19 129 22.5 135 22.5" fill="none" stroke="#a9a9a9" stroke-width="1"/></svg>
<div style="left:601px;top:63px;width:565px;height:1px;background:#a9a9a9"></div>
<div style="left:467px;top:63.5px;width:699px;height:3px;background:#9db8d8"></div>
<div style="left:467px;top:66px;width:2px;height:758px;background:linear-gradient(to right,#98b3d4,#b9cce2)"></div>
<div style="left:1164px;top:66px;width:2px;height:758px;background:linear-gradient(to left,#98b3d4,#b9cce2)"></div>
<svg style="position:absolute;left:471px;top:44px" width="17" height="17" viewBox="0 0 17 17"><path d="M1.5 3.5 L4 1 L12.5 1 L12.5 15 L1.5 15 Z" fill="#c9d6e6" stroke="#222" stroke-width="1.8"/><g fill="#444"><rect x="4" y="5" width="5" height="1.2"/><rect x="4" y="7.5" width="6" height="1.2"/><rect x="4" y="10" width="4" height="1.2"/></g><path d="M12 8.5 L13.2 11 L16 11.3 L14 13.1 L14.5 16 L12 14.6 L9.5 16 L10 13.1 L8 11.3 L10.8 11 Z" fill="#f5b800"/></svg>
<div class="t" style="left:490.8px;top:44.50px;font-size:16px;line-height:17px;color:#141414;transform:scaleX(0.95);transform-origin:left center;">Message</div>
<svg style="position:absolute;left:557px;top:45.5px" width="13" height="12" viewBox="0 0 13 12"><path d="M2.5 2 L10.5 10 M10.5 2 L2.5 10" stroke="#7d7d7d" stroke-width="4" stroke-linecap="round"/><path d="M2.5 2 L10.5 10 M10.5 2 L2.5 10" stroke="#fff" stroke-width="2.2" stroke-linecap="round"/></svg>
<div style="left:1131px;top:45px;width:10.5px;height:3.8px;border:1px solid #6d6d6d;border-radius:1px;background:#fff"></div>
<div style="left:1149.8px;top:45px;width:10.2px;height:10px;border:1px solid #6d6d6d;border-top-width:2px;background:#fff"></div>
<svg style="position:absolute;left:471.8px;top:69.7px" width="16" height="16" viewBox="0 0 16 16"><circle cx="8" cy="8" r="7.8" fill="#4a4a4a"/><rect x="6.6" y="3.2" width="2.8" height="9.6" fill="#fff"/><rect x="3.2" y="6.6" width="9.6" height="2.8" fill="#fff"/></svg>
<svg style="position:absolute;left:496px;top:69.5px" width="15" height="17" viewBox="0 0 15 17"><g fill="#444"><rect x="0.5" y="2.6" width="14.5" height="1.8"/><rect x="5.5" y="0.3" width="4.5" height="2.6" rx="1"/><path d="M1.8 5.2 L13.7 5.2 L13 16.2 L2.5 16.2 Z"/></g><g fill="#cfcfcf"><rect x="4" y="6.5" width="0.8" height="8.5"/><rect x="6" y="6.5" width="0.8" height="8.5"/><rect x="8" y="6.5" width="0.8" height="8.5"/><rect x="10" y="6.5" width="0.8" height="8.5"/></g></svg>
<svg style="position:absolute;left:519.2px;top:69.7px" width="16" height="16" viewBox="0 0 16 16"><circle cx="8" cy="8" r="7.8" fill="#4a4a4a"/><rect x="6.6" y="3.2" width="2.8" height="9.6" fill="#fff"/><rect x="3.2" y="6.6" width="9.6" height="2.8" fill="#fff"/></svg>
<svg style="position:absolute;left:543.8px;top:69.5px" width="15" height="17" viewBox="0 0 15 17"><g fill="#444"><rect x="0.5" y="2.6" width="14.5" height="1.8"/><rect x="5.5" y="0.3" width="4.5" height="2.6" rx="1"/><path d="M1.8 5.2 L13.7 5.2 L13 16.2 L2.5 16.2 Z"/></g><g fill="#cfcfcf"><rect x="4" y="6.5" width="0.8" height="8.5"/><rect x="6" y="6.5" width="0.8" height="8.5"/><rect x="8" y="6.5" width="0.8" height="8.5"/><rect x="10" y="6.5" width="0.8" height="8.5"/></g></svg>
<svg style="position:absolute;left:567.5px;top:69.5px" width="16" height="17" viewBox="0 0 16 17"><path d="M0.5 1 L13 1 L15 3 L15 16 L0.5 16 Z" fill="#222"/><rect x="3" y="2" width="9" height="5" fill="#ddd"/><rect x="3" y="10" width="9" height="5" fill="#fff"/><rect x="4" y="11.5" width="1.5" height="2.5" fill="#222"/></svg>
<svg style="position:absolute;left:590px;top:69.7px" width="16" height="16" viewBox="0 0 16 16"><circle cx="8" cy="8" r="7.8" fill="#555"/><path d="M4.8 4.8 L11.2 11.2 M11.2 4.8 L4.8 11.2" stroke="#fff" stroke-width="2.6"/></svg>
<div style="left:471px;top:96.5px;width:256px;height:347.5px;border:1px solid #a9a9a9;background:#fff"></div>
<div style="left:472px;top:97px;width:232.8px;height:324.9px;overflow:hidden;">
<div class="t" style="left:7.300000000000011px;top:7.10px;font-size:16px;line-height:17px;color:#141414;transform:scaleX(0.95);transform-origin:left center;">Message ID</div>
<div style="left:1.5px;top:52.60000000000002px;width:230px;height:1px;background:#f0f0f0"></div>
<div class="t" style="left:7.300000000000011px;top:32.30px;font-size:16px;line-height:17px;color:#141414;transform:scaleX(0.95);transform-origin:left center;">AVIProductTracking</div>
<div style="left:1.5px;top:77.33000000000001px;width:230px;height:1px;background:#f0f0f0"></div>
<div class="t" style="left:7.300000000000011px;top:57.03px;font-size:16px;line-height:17px;color:#141414;transform:scaleX(0.95);transform-origin:left center;">AVIProductionTracking</div>
<div style="left:1.5px;top:102.06000000000003px;width:230px;height:1px;background:#f0f0f0"></div>
<div class="t" style="left:7.300000000000011px;top:81.76px;font-size:16px;line-height:17px;color:#141414;transform:scaleX(0.95);transform-origin:left center;">AssembleProductTracking</div>
<div style="left:1.5px;top:126.79000000000002px;width:230px;height:1px;background:#f0f0f0"></div>
<div class="t" style="left:7.300000000000011px;top:106.49px;font-size:16px;line-height:17px;color:#141414;transform:scaleX(0.95);transform-origin:left center;">BomQuery</div>
<div style="left:1.5px;top:151.52000000000004px;width:230px;height:1px;background:#f0f0f0"></div>
<div class="t" style="left:7.300000000000011px;top:131.22px;font-size:16px;line-height:17px;color:#141414;transform:scaleX(0.95);transform-origin:left center;">BusinessData</div>
<div style="left:1.5px;top:176.25000000000006px;width:230px;height:1px;background:#f0f0f0"></div>
<div class="t" style="left:7.300000000000011px;top:155.95px;font-size:16px;line-height:17px;color:#141414;transform:scaleX(0.95);transform-origin:left center;">CardPrint</div>
<div style="left:1.5px;top:200.98000000000002px;width:230px;height:1px;background:#f0f0f0"></div>
<div class="t" style="left:7.300000000000011px;top:180.68px;font-size:16px;line-height:17px;color:#141414;transform:scaleX(0.95);transform-origin:left center;">IdentifyCardMerge</div>
<div style="left:1.5px;top:225.71000000000004px;width:230px;height:1px;background:#f0f0f0"></div>
<div class="t" style="left:7.300000000000011px;top:205.41px;font-size:16px;line-height:17px;color:#141414;transform:scaleX(0.95);transform-origin:left center;">IdentifyCardScan</div>
<div style="left:1.5px;top:250.44px;width:230px;height:1px;background:#f0f0f0"></div>
<div class="t" style="left:7.300000000000011px;top:230.14px;font-size:16px;line-height:17px;color:#141414;transform:scaleX(0.95);transform-origin:left center;">IdentifyCardSplit</div>
<div style="left:1.5px;top:275.17px;width:230px;height:1px;background:#f0f0f0"></div>
<div class="t" style="left:7.300000000000011px;top:254.87px;font-size:16px;line-height:17px;color:#141414;transform:scaleX(0.95);transform-origin:left center;">IdentifyFinalInspection</div>
<div style="left:1.5px;top:299.90000000000003px;width:230px;height:1px;background:#f0f0f0"></div>
<div class="t" style="left:7.300000000000011px;top:279.60px;font-size:16px;line-height:17px;color:#141414;transform:scaleX(0.95);transform-origin:left center;">IdentifyHeatTreatment</div>
<div style="left:1.5px;top:324.63000000000005px;width:230px;height:1px;background:#f0f0f0"></div>
<div class="t" style="left:7.300000000000011px;top:304.33px;font-size:16px;line-height:17px;color:#141414;transform:scaleX(0.95);transform-origin:left center;">IdentifyTransferIn</div>
</div>
<div style="left:704.8px;top:97.5px;width:20px;height:324.4px;background:#f0f0f0"></div>
<div style="left:705.8px;top:120.4px;width:18px;height:117.6px;background:#cdcdcd"></div>
<svg style="position:absolute;left:707.3px;top:103.0px" width="14" height="10" viewBox="0 0 14 10"><path d="M2.2 8 L7 3.2 L11.8 8" fill="none" stroke="#555" stroke-width="2"/></svg>
<svg style="position:absolute;left:707.3px;top:405.9px" width="14" height="10" viewBox="0 0 14 10"><path d="M2.2 2 L7 6.8 L11.8 2" fill="none" stroke="#555" stroke-width="2"/></svg>
<div style="left:472px;top:421.9px;width:232.8px;height:20.6px;background:#f0f0f0"></div>
<div style="left:494.4px;top:422.9px;width:174.6px;height:18px;background:#cdcdcd"></div>
<svg style="position:absolute;left:478px;top:425.09999999999997px" width="10" height="14" viewBox="0 0 10 14"><path d="M7.8 2.2 L3 7 L7.8 11.8" fill="none" stroke="#555" stroke-width="2"/></svg>
<svg style="position:absolute;left:687.3px;top:425.09999999999997px" width="10" height="14" viewBox="0 0 10 14"><path d="M2.2 2.2 L7 7 L2.2 11.8" fill="none" stroke="#555" stroke-width="2"/></svg>
<div style="left:704.8px;top:421.9px;width:21.2px;height:21.1px;background:#f0f0f0"></div>
<div style="left:730.8px;top:96.5px;width:256px;height:347.5px;border:1px solid #a9a9a9;background:#fff"></div>
<div class="t" style="left:738.5px;top:104.00px;font-size:16px;line-height:17px;color:#141414;transform:scaleX(0.95);transform-origin:left center;">Locale</div>
<div style="left:733px;top:149.6px;width:251.5px;height:1px;background:#f0f0f0"></div>
<div style="left:733px;top:174.29999999999998px;width:251.5px;height:1px;background:#f0f0f0"></div>
<div style="left:733px;top:199.0px;width:251.5px;height:1px;background:#f0f0f0"></div>
<div style="left:733px;top:223.7px;width:251.5px;height:1px;background:#f0f0f0"></div>
<div style="left:733px;top:248.4px;width:251.5px;height:1px;background:#f0f0f0"></div>
<div style="left:733px;top:273.1px;width:251.5px;height:1px;background:#f0f0f0"></div>
<div style="left:733px;top:297.8px;width:251.5px;height:1px;background:#f0f0f0"></div>
<div style="left:733px;top:322.5px;width:251.5px;height:1px;background:#f0f0f0"></div>
<div style="left:733px;top:347.20000000000005px;width:251.5px;height:1px;background:#f0f0f0"></div>
<div style="left:733px;top:371.9px;width:251.5px;height:1px;background:#f0f0f0"></div>
<div style="left:733px;top:396.6px;width:251.5px;height:1px;background:#f0f0f0"></div>
<div style="left:733px;top:421.3px;width:251.5px;height:1px;background:#f0f0f0"></div>
<div style="left:979.3px;top:97.5px;width:1px;height:345px;background:#eef3fa"></div>
<div style="left:733px;top:125.8px;width:246px;height:23px;background:#cce8ff;border:1px dotted #333"></div>
<div class="t" style="left:738.5px;top:129.75px;font-size:16px;line-height:17px;color:#141414;transform:scaleX(0.95);transform-origin:left center;">en_US</div>
<div class="t" style="left:738.5px;top:154.30px;font-size:16px;line-height:17px;color:#141414;transform:scaleX(0.95);transform-origin:left center;">zh_CN</div>
<div style="left:990.3px;top:96.3px;width:171.6px;height:699px;border:1px solid #a9a9a9;background:#fff"></div>
<div style="left:1081px;top:103.7px;width:74px;height:26px;border:1px solid #7a7a7a;background:#fff"></div>
<div style="left:1081px;top:135.8px;width:74px;height:26px;border:1px solid #7a7a7a;background:#fff"></div>
<div style="left:1081px;top:167.5px;width:74px;height:26px;border:1px solid #7a7a7a;background:#fff"></div>
<div class="t" style="right:364.70000000000005px;top:108.70px;font-size:16px;line-height:17px;color:#141414;transform:scaleX(0.95);transform-origin:right center;">Name</div>
<div class="t" style="right:364.70000000000005px;top:140.80px;font-size:16px;line-height:17px;color:#141414;transform:scaleX(0.95);transform-origin:right center;">Description</div>
<div class="t" style="right:364.70000000000005px;top:172.90px;font-size:16px;line-height:17px;color:#141414;transform:scaleX(0.95);transform-origin:right center;">Category</div>
<div style="left:1082px;top:105px;width:70px;height:24px;overflow:hidden;">
<div class="t" style="left:3px;top:3.70px;font-size:16px;line-height:17px;color:#141414;transform:scaleX(0.95);transform-origin:left center;">AVIMessage</div>
</div>
<div style="left:472.5px;top:448.3px;width:514px;height:347px;border:1px solid #a9a9a9;border-radius:6px 6px 0 0;background:#f0f0f0"></div>
<div style="left:473.5px;top:449.3px;width:85.5px;height:24.3px;background:#f0f0f0;border-right:1px solid #a9a9a9"></div>
<svg style="position:absolute;left:559px;top:449.3px" width="80" height="24.5" viewBox="0 0 80 24.5"><path d="M0 24.5 L0 5 Q0 0 5 0 L38 0 C50 0 55 9 61 16 C66 22 71 24 80 24 L80 24.5 Z" fill="#dae6f3"/><path d="M38 0.5 C50 0.5 55 9 61 16 C66 22 71 24 80 24" fill="none" stroke="#a9a9a9" stroke-width="1"/></svg>
<div style="left:473.5px;top:473.3px;width:512px;height:1px;background:#a9a9a9"></div>
<div style="left:473.5px;top:474.3px;width:512px;height:2.5px;background:#dae6f3"></div>
<div class="t" style="left:475px;top:453.50px;font-size:16px;line-height:17px;color:#141414;transform:scaleX(0.95);transform-origin:left center;">Message ID</div>
<div class="t" style="left:563px;top:453.50px;font-size:16px;line-height:17px;color:#141414;transform:scaleX(0.95);transform-origin:left center;">Locale</div>
<div style="left:474px;top:476.7px;width:509px;height:316px;border:1px solid #a9a9a9;background:#fff"></div>
<div style="left:475px;top:478px;width:486px;height:292.6px;overflow:hidden;">
<div style="left:309.4px;top:0px;width:1px;height:300px;background:#eef3fa"></div>
<div class="t" style="left:7.5px;top:4.90px;font-size:16px;line-height:17px;color:#141414;transform:scaleX(0.95);transform-origin:left center;">Message ID</div>
<div class="t" style="left:316.4px;top:4.90px;font-size:16px;line-height:17px;color:#141414;transform:scaleX(0.95);transform-origin:left center;">Message</div>
<div style="left:0px;top:50.69999999999993px;width:486px;height:1px;background:#f0f0f0"></div>
<div class="t" style="left:7.5px;top:30.90px;font-size:16px;line-height:17px;color:#141414;transform:scaleX(0.95);transform-origin:left center;">IdentifyHeatTreatment</div>
<div style="left:316px;top:27px;width:117px;height:24px;overflow:hidden;">
<div class="t" style="left:0.39999999999997726px;top:3.90px;font-size:16px;line-height:17px;color:#141414;transform:scaleX(0.95);transform-origin:left center;">Heat Treatment</div>
</div>
<div style="left:0px;top:75.37999999999988px;width:486px;height:1px;background:#f0f0f0"></div>
<div class="t" style="left:7.5px;top:55.58px;font-size:16px;line-height:17px;color:#141414;transform:scaleX(0.95);transform-origin:left center;">IdentifyTransferIn</div>
<div style="left:316px;top:52px;width:117px;height:24px;overflow:hidden;">
<div class="t" style="left:0.39999999999997726px;top:3.58px;font-size:16px;line-height:17px;color:#141414;transform:scaleX(0.95);transform-origin:left center;">Transfer In</div>
</div>
<div style="left:0px;top:100.05999999999995px;width:486px;height:1px;background:#f0f0f0"></div>
<div class="t" style="left:7.5px;top:80.26px;font-size:16px;line-height:17px;color:#141414;transform:scaleX(0.95);transform-origin:left center;">IdentifyTransferOut</div>
<div style="left:316px;top:76px;width:117px;height:24px;overflow:hidden;">
<div class="t" style="left:0.39999999999997726px;top:4.26px;font-size:16px;line-height:17px;color:#141414;transform:scaleX(0.95);transform-origin:left center;">Transfer Out</div>
</div>
<div style="left:0px;top:124.7399999999999px;width:486px;height:1px;background:#f0f0f0"></div>
<div class="t" style="left:7.5px;top:104.94px;font-size:16px;line-height:17px;color:#141414;transform:scaleX(0.95);transform-origin:left center;">PTBarcodePrint</div>
<div style="left:316px;top:101px;width:117px;height:24px;overflow:hidden;">
<div class="t" style="left:0.39999999999997726px;top:3.94px;font-size:16px;line-height:17px;color:#141414;transform:scaleX(0.95);transform-origin:left center;">Barcode Print</div>
</div>
<div style="left:0px;top:149.41999999999996px;width:486px;height:1px;background:#f0f0f0"></div>
<div class="t" style="left:7.5px;top:129.62px;font-size:16px;line-height:17px;color:#141414;transform:scaleX(0.95);transform-origin:left center;">PTBasicData</div>
<div style="left:316px;top:126px;width:117px;height:24px;overflow:hidden;">
<div class="t" style="left:0.39999999999997726px;top:3.62px;font-size:16px;line-height:17px;color:#141414;transform:scaleX(0.95);transform-origin:left center;">Basic Data</div>
</div>
<div style="left:0px;top:174.0999999999999px;width:486px;height:1px;background:#f0f0f0"></div>
<div class="t" style="left:7.5px;top:154.30px;font-size:16px;line-height:17px;color:#141414;transform:scaleX(0.95);transform-origin:left center;">PTCardPrint</div>
<div style="left:316px;top:150px;width:117px;height:24px;overflow:hidden;">
<div class="t" style="left:0.39999999999997726px;top:4.30px;font-size:16px;line-height:17px;color:#141414;transform:scaleX(0.95);transform-origin:left center;">Card Print</div>
</div>
<div style="left:0px;top:198.77999999999997px;width:486px;height:1px;background:#f0f0f0"></div>
<div class="t" style="left:7.5px;top:178.98px;font-size:16px;line-height:17px;color:#141414;transform:scaleX(0.95);transform-origin:left center;">PTDataCollection</div>
<div style="left:316px;top:175px;width:117px;height:24px;overflow:hidden;">
<div class="t" style="left:0.39999999999997726px;top:3.98px;font-size:16px;line-height:17px;color:#141414;transform:scaleX(0.95);transform-origin:left center;">Data Collection</div>
</div>
<div style="left:0px;top:223.45999999999992px;width:486px;height:1px;background:#f0f0f0"></div>
<div class="t" style="left:7.5px;top:203.66px;font-size:16px;line-height:17px;color:#141414;transform:scaleX(0.95);transform-origin:left center;">ProcessFileQuery</div>
<div style="left:316px;top:200px;width:117px;height:24px;overflow:hidden;">
<div class="t" style="left:0.39999999999997726px;top:3.66px;font-size:16px;line-height:17px;color:#141414;transform:scaleX(0.95);transform-origin:left center;">File Query</div>
</div>
<div style="left:0px;top:248.13999999999987px;width:486px;height:1px;background:#f0f0f0"></div>
<div class="t" style="left:7.5px;top:228.34px;font-size:16px;line-height:17px;color:#141414;transform:scaleX(0.95);transform-origin:left center;">ProcessScan</div>
<div style="left:316px;top:224px;width:117px;height:24px;overflow:hidden;">
<div class="t" style="left:0.39999999999997726px;top:4.34px;font-size:16px;line-height:17px;color:#141414;transform:scaleX(0.95);transform-origin:left center;">Process Scan</div>
</div>
<div style="left:0px;top:272.81999999999994px;width:486px;height:1px;background:#f0f0f0"></div>
<div class="t" style="left:7.5px;top:253.02px;font-size:16px;line-height:17px;color:#141414;transform:scaleX(0.95);transform-origin:left center;">ProductArchive</div>
<div style="left:316px;top:249px;width:117px;height:24px;overflow:hidden;">
<div class="t" style="left:0.39999999999997726px;top:4.02px;font-size:16px;line-height:17px;color:#141414;transform:scaleX(0.95);transform-origin:left center;">Product Archive</div>
</div>
<div style="left:0px;top:297.5px;width:486px;height:1px;background:#f0f0f0"></div>
<div class="t" style="left:7.5px;top:277.70px;font-size:16px;line-height:17px;color:#141414;transform:scaleX(0.95);transform-origin:left center;">ProductArchiveEdit</div>
<div style="left:316px;top:274px;width:117px;height:24px;overflow:hidden;">
<div class="t" style="left:0.39999999999997726px;top:3.70px;font-size:16px;line-height:17px;color:#141414;transform:scaleX(0.95);transform-origin:left center;">Edit Product Archive</div>
</div>
</div>
<div style="left:961px;top:477.7px;width:20px;height:292.9px;background:#f0f0f0"></div>
<div style="left:962px;top:594.9px;width:18px;height:96px;background:#cdcdcd"></div>
<svg style="position:absolute;left:963.5px;top:483.2px" width="14" height="10" viewBox="0 0 14 10"><path d="M2.2 8 L7 3.2 L11.8 8" fill="none" stroke="#555" stroke-width="2"/></svg>
<svg style="position:absolute;left:963.5px;top:754.5999999999999px" width="14" height="10" viewBox="0 0 14 10"><path d="M2.2 2 L7 6.8 L11.8 2" fill="none" stroke="#555" stroke-width="2"/></svg>
<div style="left:475px;top:770.6px;width:486px;height:20.6px;background:#f0f0f0"></div>
<div style="left:497.5px;top:771.6px;width:345px;height:18px;background:#cdcdcd"></div>
<svg style="position:absolute;left:481px;top:773.8000000000001px" width="10" height="14" viewBox="0 0 10 14"><path d="M7.8 2.2 L3 7 L7.8 11.8" fill="none" stroke="#555" stroke-width="2"/></svg>
<svg style="position:absolute;left:943.5px;top:773.8000000000001px" width="10" height="14" viewBox="0 0 10 14"><path d="M2.2 2.2 L7 7 L2.2 11.8" fill="none" stroke="#555" stroke-width="2"/></svg>
<div style="left:961px;top:770.6px;width:21px;height:20px;background:#f0f0f0"></div>
<div style="left:469px;top:798px;width:695px;height:1px;background:#a9a9a9"></div>
<div style="left:638.5px;top:798.5px;width:1px;height:26px;background:#a9a9a9"></div>
<div style="left:808.6px;top:797.5px;width:89.4px;height:25px;background:#fff;border:1px solid #a9a9a9;border-top:none;border-radius:0 0 4px 4px"></div>
<div class="t" style="left:473.2px;top:802.30px;font-size:16px;line-height:17px;color:#141414;transform:scaleX(0.95);transform-origin:left center;">MonthPlanCastMessage</div>
<div class="t" style="left:643.2px;top:802.30px;font-size:16px;line-height:17px;color:#141414;transform:scaleX(0.95);transform-origin:left center;">MonthPlanWMMessage</div>
<div class="t" style="left:812px;top:802.30px;font-size:16px;line-height:17px;color:#141414;transform:scaleX(0.95);transform-origin:left center;letter-spacing:-0.2px">AVIMessage</div>
</body></html>
